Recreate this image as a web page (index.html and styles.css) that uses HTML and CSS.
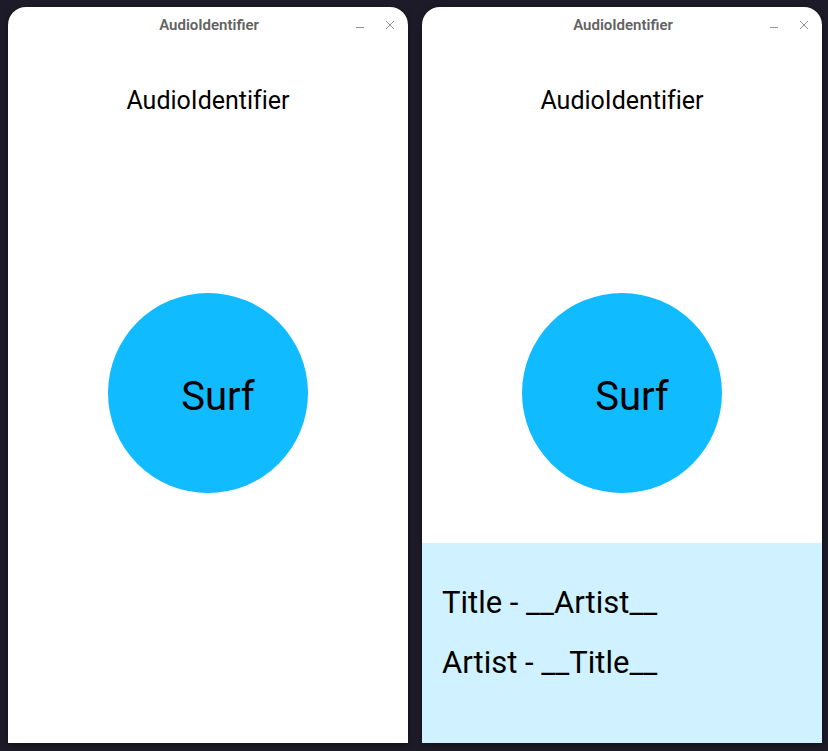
FILE: index.html
```html
<!DOCTYPE html>
<html lang="en">
<head>
<meta charset="utf-8">
<title>AudioIdentifier</title>
<link rel="stylesheet" href="styles.css">
</head>
<body>
<main class="desktop">
  <section class="window">
    <header class="titlebar">
      <span class="titlebar-name">AudioIdentifier</span>
      <button class="window-button" aria-label="Minimize"><svg viewBox="0 0 10 10"><path d="M1 7.5H9"/></svg></button>
      <button class="window-button" aria-label="Close"><svg viewBox="0 0 10 10"><path d="M1 1L9 9M9 1L1 9"/></svg></button>
    </header>
    <h1 class="heading">AudioIdentifier</h1>
    <button class="surf">Surf</button>
  </section>
  <section class="window">
    <header class="titlebar">
      <span class="titlebar-name">AudioIdentifier</span>
      <button class="window-button" aria-label="Minimize"><svg viewBox="0 0 10 10"><path d="M1 7.5H9"/></svg></button>
      <button class="window-button" aria-label="Close"><svg viewBox="0 0 10 10"><path d="M1 1L9 9M9 1L1 9"/></svg></button>
    </header>
    <h1 class="heading">AudioIdentifier</h1>
    <button class="surf">Surf</button>
    <div class="result">
      <p class="result-line">Title - __Artist__</p>
      <p class="result-line">Artist - __Title__</p>
    </div>
  </section>
</main>
</body>
</html>
```
FILE: styles.css
```css
* { box-sizing: border-box; }
body {
  margin: 0;
  background: #1c1b27;
  font-family: Roboto, sans-serif;
  color: #000;
}
.desktop {
  display: grid;
  grid-template-columns: 1fr 1fr;
  gap: 14px;
  min-height: 100vh;
  padding: 7px 6px 8px 8px;
}
.window {
  display: flex;
  flex-direction: column;
  align-items: center;
  background: #fff;
  border-radius: 18px 18px 0 0;
  box-shadow: 0 2px 6px rgba(0, 0, 0, 0.4);
}
.titlebar {
  display: grid;
  grid-template-columns: 62px 1fr 30px 30px;
  align-items: center;
  width: 100%;
  height: 36px;
  padding: 0 3px;
}
.titlebar-name {
  grid-column: 2;
  text-align: center;
  font-size: 15px;
  font-weight: 600;
  color: #626262;
}
.window-button {
  display: grid;
  place-items: center;
  height: 30px;
  padding: 0;
  border: 0;
  background: none;
}
.window-button svg {
  width: 10px;
  height: 10px;
  fill: none;
  stroke: #929292;
}
.heading {
  margin: 44px 0 0;
  font-size: 25px;
  line-height: 28px;
  font-weight: 400;
  font-variant-ligatures: none;
}
.surf {
  width: 200px;
  height: 200px;
  margin: 178px 0 50px;
  padding: 6px 0 0 20px;
  border: 0;
  border-radius: 50%;
  background: #10bbff;
  color: #000;
  font-family: inherit;
  font-size: 40px;
}
.result {
  flex: 1;
  width: 100%;
  padding: 30px 20px;
  background: #d0f1ff;
}
.result-line {
  margin: 0;
  font-size: 31px;
  line-height: 60px;
}
```
